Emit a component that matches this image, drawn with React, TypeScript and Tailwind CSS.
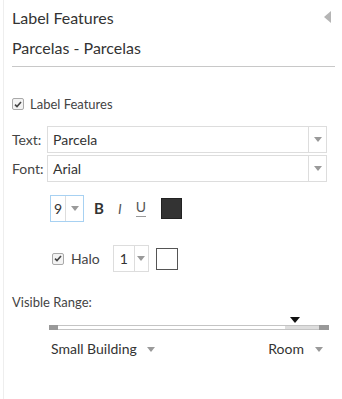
import React from 'react';

const font = { fontFamily: 'Lato, "Open Sans", sans-serif' };

function Caret({ className = '' }: { className?: string }) {
  return (
    <svg width="8" height="5" viewBox="0 0 8 5" className={className}>
      <path d="M0 0h8L4 5z" fill="#9a9a9a" />
    </svg>
  );
}

function Check() {
  return (
    <span className="flex h-[12px] w-[12px] items-center justify-center rounded-[2px] border border-[#a9a9a9] bg-[#f3f3f3]">
      <svg width="8" height="7" viewBox="0 0 8 7">
        <path d="M1 3.6l2 2L7 1" stroke="#444" strokeWidth="1.6" fill="none" />
      </svg>
    </span>
  );
}

function Select({ label, value }: { label: string; value: string }) {
  return (
    <div className="flex items-center">
      <span className="w-[35px] text-[14px] text-[#444]">{label}</span>
      <div className="flex h-[27px] w-[280px] border border-[#ddd] bg-white">
        <div className="flex flex-1 items-center px-[5px] text-[14px] text-[#333]">{value}</div>
        <div className="flex w-[18px] items-center justify-center border-l border-[#ddd]">
          <Caret />
        </div>
      </div>
    </div>
  );
}

export default function App() {
  return (
    <div className="relative h-[399px] w-[342px] bg-white pl-[3px]" style={font}>
      <div className="h-full border-l border-[#eeeeee] pl-[8px] pr-[7px]">
        {/* Kopfbereich */}
        <div className="pt-[8px] text-[16px] leading-[20px] text-[#333]">Label Features</div>
        <div className="mt-[10px] text-[16px] leading-[20px] text-[#333]">Parcelas - Parcelas</div>
        <div className="mt-[8px] h-px bg-[#c8c8c8]" />

        <div className="mt-[29px] flex items-center gap-[6px] text-[13px] leading-[16px] text-[#444]">
          <Check />
          <span>Label Features</span>
        </div>

        <div className="mt-[14px] flex flex-col gap-[2px]">
          <Select label="Text:" value="Parcela" />
          <Select label="Font:" value="Arial" />
        </div>

        {/* Schrift */}
        <div className="ml-[38px] mt-[13px] flex items-center">
          <div className="flex h-[27px] w-[34px] border border-[#a7d1f2]">
            <div className="flex w-[14px] items-center justify-center text-[14px] text-[#333]">9</div>
            <div className="flex flex-1 items-center justify-center border-l border-[#ddd]">
              <Caret />
            </div>
          </div>
          <span className="ml-[10px] text-[15px] font-bold text-[#333]">B</span>
          <span className="ml-[14px] text-[14px] italic text-[#555]">I</span>
          <span className="ml-[14px] flex flex-col items-center text-[14px] leading-[14px] text-[#555]">
            U
            <span className="mt-[2px] h-px w-[10px] bg-[#999]" />
          </span>
          <span className="ml-[15px] h-[21px] w-[21px] border border-[#222] bg-[#333]" />
        </div>

        {/* Halo */}
        <div className="ml-[40px] mt-[23px] flex items-center">
          <Check />
          <span className="ml-[7px] text-[14px] text-[#444]">Halo</span>
          <div className="ml-[13px] flex h-[27px] w-[36px] border border-[#ddd]">
            <div className="flex w-[20px] items-center justify-center text-[14px] text-[#333]">1</div>
            <div className="flex flex-1 items-center justify-center border-l border-[#ddd]">
              <Caret />
            </div>
          </div>
          <span className="ml-[7px] h-[22px] w-[22px] border border-[#555] bg-white" />
        </div>

        <div className="mt-[22px] text-[13px] leading-[16px] text-[#444]">Visible Range:</div>

        {/* Regler */}
        <div className="ml-[37px] mt-[7px] w-[280px]">
          <div className="flex h-[5px] justify-end pr-[29px]">
            <svg width="10" height="6" viewBox="0 0 10 6">
              <path d="M0 0h10L5 6z" fill="#111" />
            </svg>
          </div>
          <div className="mt-[3px] flex h-[5px] items-stretch">
            <span className="w-[9px] bg-[#999]" />
            <span className="flex-1 border-y border-[#c4c4c4] bg-white" />
            <span className="w-[34px] border-y border-[#c4c4c4] bg-[#ddd]" />
            <span className="w-[10px] bg-[#999]" />
          </div>
          <div className="mt-[10px] flex items-center justify-between pl-[2px] pr-[6px] text-[14px] leading-[18px] text-[#333]">
            <span className="flex items-center gap-[10px]">
              Small Building <Caret />
            </span>
            <span className="flex items-center gap-[11px]">
              Room <Caret />
            </span>
          </div>
        </div>
      </div>

      {/* Einklappen */}
      <svg width="7" height="12" viewBox="0 0 7 12" className="absolute right-[11px] top-[11px]">
        <path d="M7 0v12L0 6z" fill="#b5b5b5" />
      </svg>
    </div>
  );
}
